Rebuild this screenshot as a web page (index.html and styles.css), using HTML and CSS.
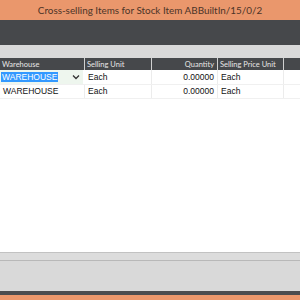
FILE: index.html
```html
<!DOCTYPE html>
<html lang="en">
<head>
    <meta charset="UTF-8">
    <title>Cross-selling Items</title>
    <link rel="stylesheet" href="styles.css">
</head>
<body>

    <div class="window">
        <div class="title">Cross-selling Items for Stock Item ABBuiltIn/15/0/2</div>
        <div class="toolbar"></div>
        <div class="strip"></div>

        <div class="grid">
            <div class="row head">
                <div class="cell">Warehouse</div>
                <div class="cell">Selling Unit</div>
                <div class="cell num">Quantity</div>
                <div class="cell">Selling Price Unit</div>
                <div class="cell"></div>
            </div>
            <div class="row">
                <div class="cell edit">
                    <span class="sel">WAREHOUSE</span>
                    <svg class="chev" width="8" height="6" viewBox="0 0 8 6">
                        <path d="M1 1.5 L4 4.5 L7 1.5" fill="none" stroke="#333" stroke-width="1.3"/>
                    </svg>
                </div>
                <div class="cell">Each</div>
                <div class="cell num">0.00000</div>
                <div class="cell">Each</div>
                <div class="cell"></div>
            </div>
            <div class="row">
                <div class="cell">WAREHOUSE</div>
                <div class="cell">Each</div>
                <div class="cell num">0.00000</div>
                <div class="cell">Each</div>
                <div class="cell"></div>
            </div>
        </div>

        <div class="footer">
            <div class="footer-top"></div>
            <div class="footer-body"></div>
            <div class="footer-dark"></div>
            <div class="footer-orange"></div>
        </div>
    </div>

</body>
</html>
```

FILE: styles.css
```css
body {
    margin: 0;
    font-family: Lato, "Open Sans", sans-serif;
    background-color: #fff;
}

.window {
    width: 300px;
    height: 300px;
    display: flex;
    flex-direction: column;
    overflow: hidden;
}

.title {
    height: 20px;
    background-color: #ea976c;
    color: #4a3428;
    font-size: 9.9px;
    line-height: 20px;
    text-align: center;
    white-space: nowrap;
}

.toolbar {
    height: 25px;
    background-color: #46484b;
}

.strip {
    height: 13px;
    background-color: #d9d9d9;
}

.grid {
    flex: 1;
    font-size: 7.5px;
}

.row {
    display: grid;
    grid-template-columns: 85px 67px 66px 66px 1fr;
    height: 13.5px;
    border-bottom: 1px solid #f0f0f0;
    font-family: "Liberation Sans", Arial, sans-serif;
    font-size: 8.5px;
}

.cell {
    display: flex;
    align-items: center;
    padding: 0 3px;
    border-right: 1px solid #ececec;
    color: #111;
    white-space: nowrap;
    overflow: hidden;
}

.num {
    justify-content: flex-end;
}

.head {
    height: 12px;
    background-color: #46484b;
    border-bottom: none;
    font-family: Lato, "Open Sans", sans-serif;
    font-size: 7.5px;
}

.head .cell {
    color: #e6e6e6;
    border-right: 1px solid #d0d0d0;
    padding-left: 2px;
}

.head .cell:last-child {
    border-right: none;
}

.row .cell:last-child {
    border-right: none;
}

.edit {
    background-color: #eef6ee;
    padding-left: 1px;
    margin-right: 2px;
    border-right: none;
    justify-content: space-between;
}

.sel {
    background-color: #3399ff;
    color: #fff;
    padding: 0 1px;
}

.chev {
    display: block;
}

.footer {
    display: flex;
    flex-direction: column;
}

.footer-top {
    height: 7px;
    background-color: #dcdcdc;
    border-top: 1px solid #c2c2c2;
    border-bottom: 1px solid #b8b8b8;
}

.footer-body {
    height: 30px;
    background-color: #d9d9d9;
}

.footer-dark {
    height: 4px;
    background-color: #4a4c4f;
}

.footer-orange {
    height: 5px;
    background-color: #ea976c;
}
```
